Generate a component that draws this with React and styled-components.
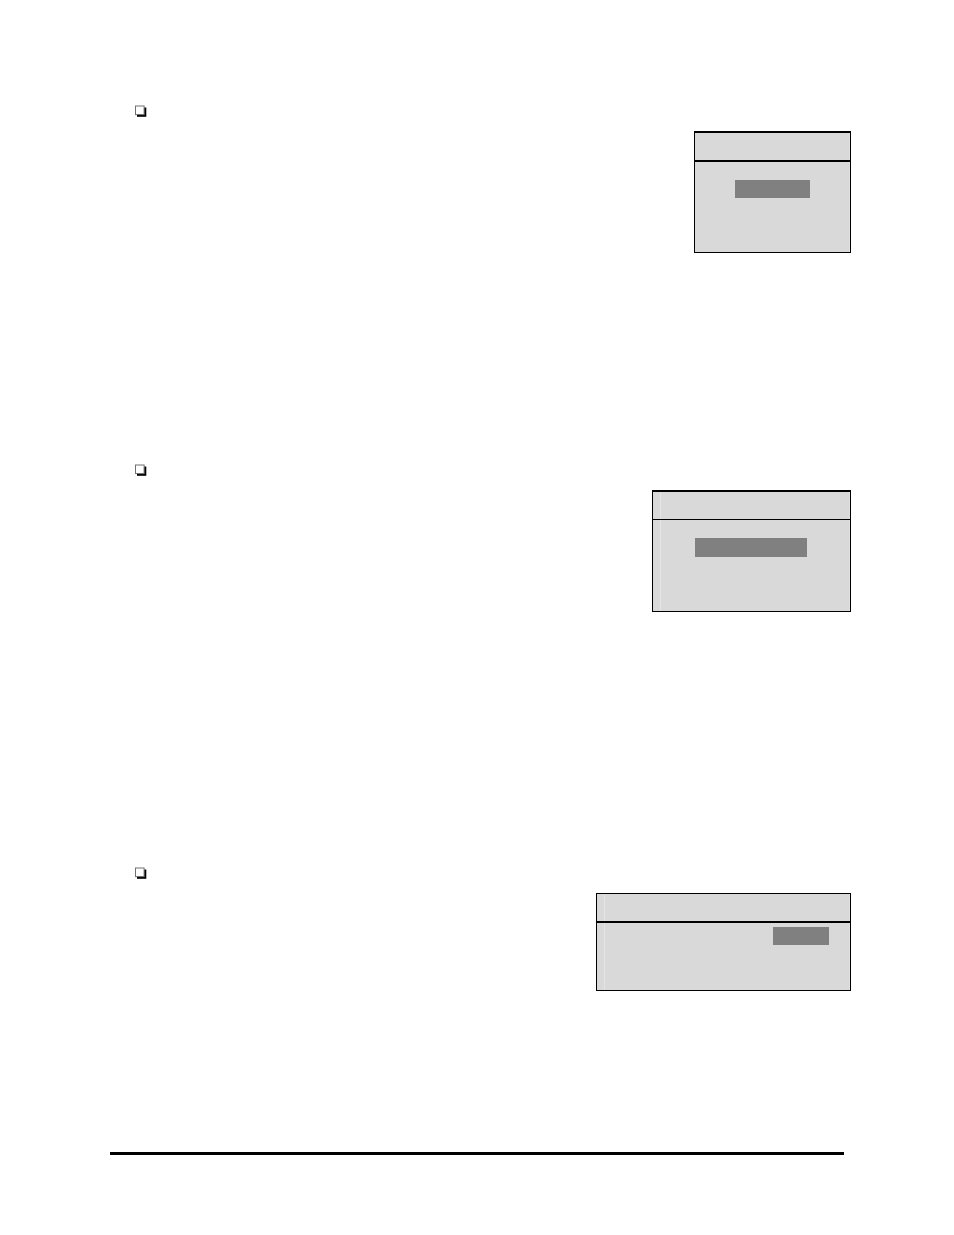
import React from "react";
import styled, { createGlobalStyle } from "styled-components";

const GlobalStyle = createGlobalStyle`
  body {
    margin: 0;
    background: #ffffff;
    font-family: "Liberation Sans", Arial, sans-serif;
  }
`;

const Page = styled.main`
  padding: 105px 103px 80px 110px;
`;

const Section = styled.section`
  display: flex;
  flex-direction: column;
  gap: 14px;
  min-height: ${props => props.$height}px;
  padding-left: 25px;
`;

const BulletIcon = styled.svg`
  display: block;
  width: 12px;
  height: 12px;
`;

const Panel = styled.div`
  align-self: flex-end;
  box-sizing: border-box;
  width: ${props => props.$width}px;
  border: 1px solid #000000;
  border-top-width: ${props => props.$top}px;
  background: #d9d9d9;
`;

// pale seams run down the edges of the shaded cells
const Cell = styled.div`
  box-sizing: border-box;
  border-right: 1px solid #e0e0e0;
  background: ${props =>
    props.$seam
      ? "linear-gradient(#e4e4e4, #e4e4e4) 7px 0 / 1px 100% no-repeat"
      : "none"};
`;

const PanelHeader = styled(Cell)`
  height: 27px;
`;

const Divider = styled.div`
  height: ${props => props.$line}px;
  background: #000000;
`;

const PanelBody = styled(Cell)`
  display: flex;
  justify-content: flex-end;
  align-items: flex-start;
  height: ${props => props.$height}px;
  padding: ${props => props.$pad};
`;

const Highlight = styled.div`
  width: ${props => props.$width}px;
  height: ${props => props.$height}px;
  background: #808080;
`;

const Rule = styled.hr`
  height: 3px;
  margin: 0 7px 0 0;
  border: 0;
  background: #000000;
`;

const Bullet = () => (
  <BulletIcon viewBox="0 0 12 12" aria-hidden="true">
    <rect x="2" y="2.5" width="9.3" height="9.3" fill="#000000" />
    <rect
      x="0.5"
      y="1"
      width="8.6"
      height="8.6"
      fill="#ffffff"
      stroke="#707070"
    />
  </BulletIcon>
);

const sections = [
  {
    id: 1,
    height: 359,
    width: 157,
    top: 2,
    line: 2,
    bodyHeight: 90,
    pad: "18px 39px 0 0",
    bar: { width: 75, height: 18 },
    seam: false,
  },
  {
    id: 2,
    height: 403,
    width: 199,
    top: 2,
    line: 1,
    bodyHeight: 91,
    pad: "18px 42px 0 0",
    bar: { width: 112, height: 19 },
    seam: true,
  },
  {
    id: 3,
    height: 285,
    width: 255,
    top: 1,
    line: 2,
    bodyHeight: 67,
    pad: "4px 20px 0 0",
    bar: { width: 56, height: 18 },
    seam: true,
  },
];

const App = () => (
  <>
    <GlobalStyle />
    <Page>
      {sections.map(item => (
        <Section key={item.id} $height={item.height}>
          <Bullet />
          <Panel $width={item.width} $top={item.top}>
            <PanelHeader $seam={item.seam} />
            <Divider $line={item.line} />
            <PanelBody
              $seam={item.seam}
              $height={item.bodyHeight}
              $pad={item.pad}
            >
              <Highlight $width={item.bar.width} $height={item.bar.height} />
            </PanelBody>
          </Panel>
        </Section>
      ))}
      <Rule />
    </Page>
  </>
);

export default App;
